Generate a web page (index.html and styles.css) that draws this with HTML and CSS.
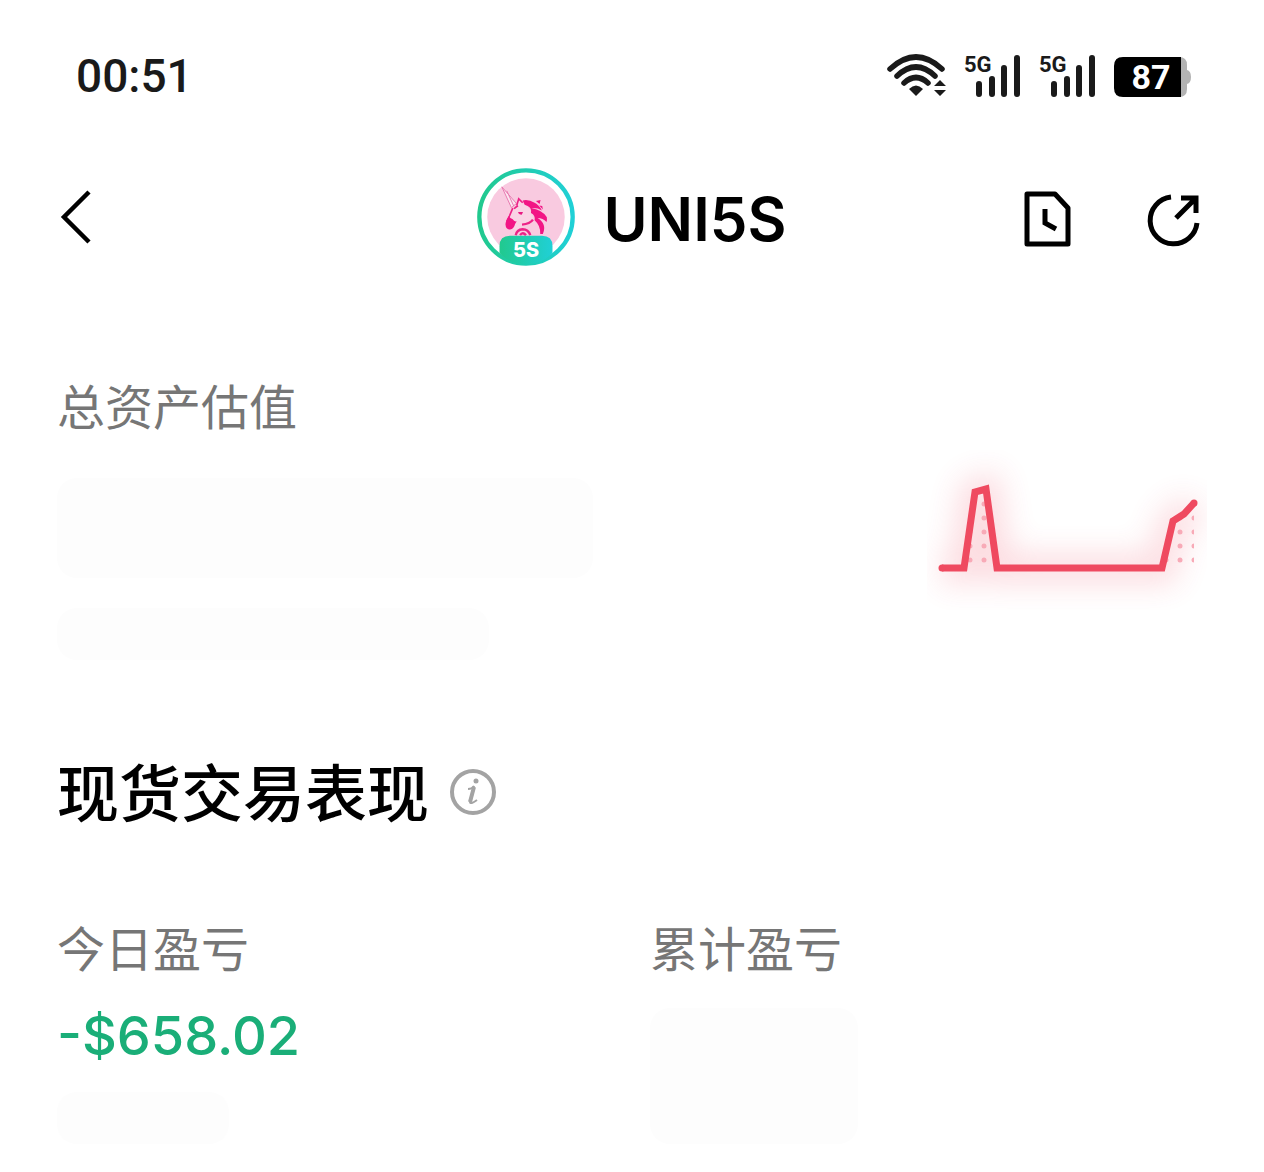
FILE: index.html
```
<!DOCTYPE html>
<html lang="zh-CN">
  <head>
    <meta charset="utf-8">
    <meta name="viewport" content="width=device-width, initial-scale=1">
    <title>UNI5S</title>
    <link rel="stylesheet" href="styles.css">
  </head>

  <body>

    <div class="status-bar">
      <span class="time">00:51</span>
      <div class="status-icons">
        <svg class="wifi" width="60" height="44" viewBox="0 0 60 44">
          <g fill="none" stroke="#1a1a1a" stroke-width="5.5" stroke-linecap="round">
            <path d="M3 15Q29 -9 55 15"/>
            <path d="M10 22Q29 4 48 22"/>
            <path d="M17 29Q29 18 41 29"/>
          </g>
          <path d="M22 35Q29 28 36 35L29 42Z" fill="#1a1a1a"/>
          <path d="M47 32L53 26L59 32ZM47 36L53 42L59 36Z" fill="#1a1a1a"/>
        </svg>
        <svg class="signal" width="58" height="56" viewBox="0 -6 58 56">
          <text class="signal-text" x="0" y="18">5G</text>
          <path d="M15 30V40M28 25V40M40 14V40M53 4V40" stroke="#1a1a1a" stroke-width="6" stroke-linecap="round"/>
        </svg>
        <svg class="signal" width="58" height="56" viewBox="0 -6 58 56">
          <text class="signal-text" x="0" y="18">5G</text>
          <path d="M15 30V40M28 25V40M40 14V40M53 4V40" stroke="#1a1a1a" stroke-width="6" stroke-linecap="round"/>
        </svg>
        <svg class="battery" width="78" height="48" viewBox="0 -5 78 48">
          <path d="M60 0H65Q73 0 73 8V13Q77 14 77 20Q77 26 73 27V32Q73 40 65 40H60Z" fill="#b3b3b3"/>
          <path d="M9 0H67V40H9Q0 40 0 31V9Q0 0 9 0Z" fill="#000"/>
          <text class="battery-text" x="37" y="32">87</text>
        </svg>
      </div>
    </div>

    <header class="header">
      <button class="icon-button back-button" aria-label="返回">
        <svg width="36" height="56" viewBox="1 0 36 56">
          <path d="M33 3L8 28L33 53" fill="none" stroke="#000" stroke-width="4.5"/>
        </svg>
      </button>
      <div class="coin">
        <svg class="coin-logo" width="98" height="98" viewBox="30 23 296 296">
          <defs>
            <linearGradient id="ring" x1="0" x2="1">
              <stop offset="0" stop-color="#21c98e"/>
              <stop offset="1" stop-color="#20d0d6"/>
            </linearGradient>
          </defs>
          <circle cx="178" cy="171" r="141" fill="#fff" stroke="url(#ring)" stroke-width="13"/>
          <circle cx="178" cy="171" r="117" fill="#f9cae0"/>
          <g transform="translate(78 60)">
            <!-- horn and head -->
            <path d="M27 20L71 70L56 83Z" fill="#fbe5f0" stroke="#e87bb0" stroke-width="3"/>
            <path d="M42 32L63 78" stroke="#e87bb0" stroke-width="3"/>
            <path d="M72 78L78 55L92 70Q118 85 122 118L100 135L70 150L44 140L48 108L60 86Z" fill="#fad3e5"/>
            <path d="M72 76L78 56L90 68M60 84L50 108L42 124M76 77Q70 80 64 86" fill="none" stroke="#ed2387" stroke-width="5"/>
            <!-- muzzle -->
            <path d="M48 108Q38 124 38 134Q39 149 52 149Q64 146 67 132L72 124Q64 126 60 118Q54 118 48 108Z" fill="#f21585"/>
            <path d="M76 96H91L87 104Q78 104 76 96Z" fill="#e81982"/>
            <!-- mane -->
            <path d="M90 61Q108 57 126 68Q139 74 148 91Q134 82 116 84Q152 91 163 112Q164 119 162 126Q151 114 135 114Q164 132 151 162H143Q144 137 126 121Q129 106 115 99Q118 84 105 78L96 74Z" fill="#f21585"/>
            <path d="M130 63L144 60L141 72ZM140 76L149 78L151 88Z" fill="#f21585"/>
            <path d="M88 134Q112 132 121 119" fill="none" stroke="#ed2387" stroke-width="7"/>
            <path d="M69 166Q72 149 90 148Q107 148 113 166M82 166Q90 154 100 166" fill="none" stroke="#ed2387" stroke-width="7"/>
          </g>
          <path d="M98 259Q98 228 130 228H226Q258 228 258 259V280Q224 314 178 314Q132 314 98 280Z" fill="url(#ring)"/>
          <text class="coin-text" x="178" y="291">5S</text>
        </svg>
        <h1 class="coin-name">UNI5S</h1>
      </div>
      <div class="header-actions">
        <button class="icon-button" aria-label="历史记录">
          <svg width="48" height="60" viewBox="0 -4 48 60">
            <path d="M3 3H31L44 17V53H3Z" fill="none" stroke="#000" stroke-width="5" stroke-linejoin="round"/>
            <path d="M21 18V32L32 38" fill="none" stroke="#000" stroke-width="5"/>
          </svg>
        </button>
        <button class="icon-button" aria-label="分享">
          <svg width="60" height="60" viewBox="0 -3 60 60">
            <path d="M24 7A23.500 23.500 0 1 0 50 33" fill="none" stroke="#000" stroke-width="5"/>
            <path d="M29 28L48 9M34 8H49V23" fill="none" stroke="#000" stroke-width="5"/>
          </svg>
        </button>
      </div>
    </header>

    <main>
      <section class="assets">
        <div>
          <p class="label">总资产估值</p>
          <div class="hidden-total"></div>
          <div class="hidden-detail"></div>
        </div>
        <svg class="chart" width="280" height="160" viewBox="-1 0 280 160" role="img" aria-label="资产走势">
          <defs>
            <filter id="glow" x="-30%" y="-90%" width="160%" height="280%">
              <feGaussianBlur stdDeviation="15"/>
            </filter>
            <pattern id="dots" x="7" y="5" width="14" height="14" patternUnits="userSpaceOnUse">
              <circle cx="7" cy="7" r="2.500" fill="#f8aab7"/>
            </pattern>
          </defs>
          <path d="M14 119H36L47 43L58 40L69 119H234L245 73L256 66L266 55" fill="none" stroke="#ef4a60" stroke-width="30" opacity="0.19" filter="url(#glow)"/>
          <path d="M36 116L47 43L58 40L69 116ZM234 116L245 73L256 66L266 55V116Z" fill="url(#dots)"/>
          <path d="M14 118H36L47 42L58 39L69 118H234L245 71L256 64L266 53" fill="none" stroke="#ef4a60" stroke-width="7"/>
          <circle cx="14" cy="118" r="3.500" fill="#ef4a60"/>
          <circle cx="266" cy="53" r="3.500" fill="#ef4a60"/>
        </svg>
      </section>

      <section>
        <div class="section-title">
          <h2>现货交易表现</h2>
          <button class="icon-button info-button" aria-label="说明">
            <svg width="48" height="48" viewBox="0 0 48 48">
              <circle cx="24" cy="24" r="21" fill="none" stroke="#a3a3a3" stroke-width="4"/>
              <circle cx="27" cy="13" r="2.500" fill="#a3a3a3"/>
              <path d="M19 21Q23 21 25 18L21 34Q21 37 28 32" fill="none" stroke="#a3a3a3" stroke-width="2"/>
              <path d="M25 19L21 34" stroke="#a3a3a3" stroke-width="4"/>
            </svg>
          </button>
        </div>
        <div class="pnl-grid">
          <div>
            <p class="label">今日盈亏</p>
            <p class="pnl-value">-$658.02</p>
            <div class="hidden-percent"></div>
          </div>
          <div>
            <p class="label">累计盈亏</p>
            <div class="hidden-pnl"></div>
          </div>
        </div>
      </section>
    </main>

  </body>

</html>
```
FILE: styles.css
```
body{
  margin: 0;
  background-color: white;
  color: black;
  font-family: Inter, "Noto Sans CJK SC", sans-serif;
}
h1, h2, p{
  margin: 0;
}
svg{
  display: block;
}
.status-bar{
  display: flex;
  justify-content: space-between;
  align-items: center;
  height: 152px;
  padding: 0 72px 0 76px;
}
.time{
  font-family: Roboto, sans-serif;
  font-size: 46px;
  font-weight: 500;
  color: #1a1a1a;
}
.status-icons{
  display: flex;
  align-items: center;
  gap: 17px;
}
.signal-text{
  font-family: Roboto, sans-serif;
  font-size: 22px;
  font-weight: 700;
  fill: #1a1a1a;
}
.battery-text{
  font-family: Roboto, sans-serif;
  font-size: 34px;
  font-weight: 700;
  fill: white;
  text-anchor: middle;
}
.header{
  display: grid;
  grid-template-columns: 1fr auto 1fr;
  align-items: center;
  height: 130px;
  padding: 0 57px;
}
.icon-button{
  padding: 0;
  border: none;
  background: none;
  cursor: pointer;
}
.back-button{
  justify-self: start;
}
.coin{
  display: flex;
  align-items: center;
  gap: 28px;
}
.coin-text{
  font-size: 60px;
  font-weight: 800;
  fill: white;
  text-anchor: middle;
}
.coin-name{
  padding-top: 4px;
  font-size: 60px;
  font-weight: 600;
  line-height: 80px;
}
.header-actions{
  display: flex;
  justify-content: flex-end;
  gap: 75px;
}
main{
  padding: 92px 57px 20px;
}
.assets{
  display: flex;
  justify-content: space-between;
  align-items: flex-end;
  height: 286px;
  margin-bottom: 92px;
}
.label{
  font-family: "Noto Sans CJK SC", sans-serif;
  font-size: 48px;
  line-height: 60px;
  color: #767676;
}
/* blanked amounts */
.hidden-total, .hidden-detail, .hidden-percent, .hidden-pnl{
  background-color: #fdfdfd;
  border-radius: 20px;
}
.hidden-total{
  width: 536px;
  height: 100px;
  margin-top: 44px;
}
.hidden-detail{
  width: 432px;
  height: 52px;
  margin-top: 30px;
}
.chart{
  margin-bottom: 50px;
}
.section-title{
  display: flex;
  align-items: center;
  gap: 20px;
}
h2{
  padding-bottom: 4px;
  font-family: "Noto Sans CJK SC", sans-serif;
  font-size: 62px;
  font-weight: 500;
  line-height: 76px;
}
.pnl-grid{
  display: grid;
  grid-template-columns: 1fr 1fr;
  gap: 36px;
  margin-top: 84px;
}
.pnl-value{
  margin-top: 28px;
  font-size: 54px;
  font-weight: 500;
  line-height: 64px;
  color: #1aae78;
}
.hidden-percent{
  width: 172px;
  height: 52px;
  margin-top: 24px;
}
.hidden-pnl{
  width: 208px;
  height: 136px;
  margin-top: 32px;
}
```
